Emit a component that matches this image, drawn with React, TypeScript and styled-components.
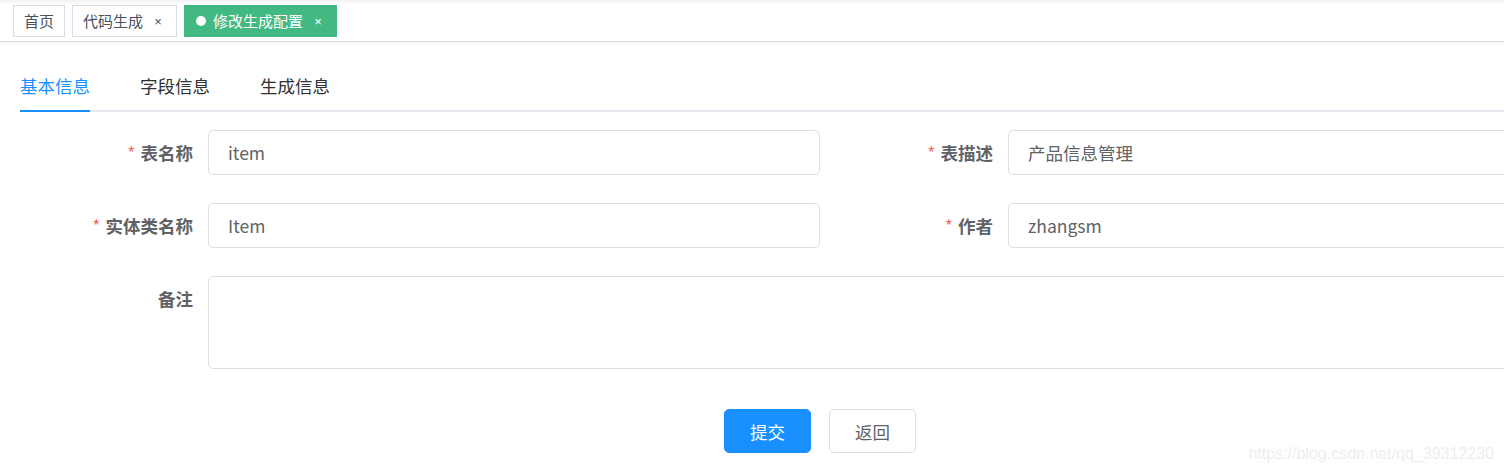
import React from "react";
import styled, { createGlobalStyle, css } from "styled-components";

const Global = createGlobalStyle`
  html, body { margin: 0; padding: 0; background: #fff; }
  body {
    font-family: "Segoe UI", "Noto Sans CJK SC", "Noto Sans", Arial, sans-serif;
    overflow: hidden;
  }
  * { box-sizing: border-box; }
`;

const Page = styled.div`
  position: relative;
  width: 1504px;
  height: 469px;
  overflow: hidden;
`;

const TagsBar = styled.div`
  height: 42px;
  display: flex;
  align-items: center;
  gap: 7px;
  padding-left: 13px;
  border-bottom: 1px solid #d8dce5;
  box-shadow: 0 1px 3px 0 rgba(0, 0, 0, 0.06);
  background: linear-gradient(#f0f1f3 0px, #fff 4px);
`;

const Tag = styled.div<{ $active?: boolean }>`
  height: 32px;
  display: flex;
  align-items: center;
  padding: 0 10px;
  border: 1px solid #d8dce5;
  background: #fff;
  color: #495060;
  font-size: 15px;
  font-family: "Noto Sans CJK SC", sans-serif;
  ${(p) =>
    p.$active &&
    css`
      padding-left: 11px;
      background: #42b983;
      border-color: #42b983;
      color: #fff;
    `}
`;

const Dot = styled.span`
  width: 10px;
  height: 10px;
  border-radius: 50%;
  background: #fff;
  margin-right: 7px;
`;

const Close = styled.span`
  display: inline-flex;
  justify-content: center;
  width: 16px;
  font-size: 13px;
  margin-left: 7px;
  margin-top: 2px;
  font-family: "Liberation Sans", Arial, sans-serif;
`;

const Main = styled.div`
  padding: 20px 0 0 20px;
`;

const TabsHeader = styled.div`
  display: flex;
  height: 50px;
  border-bottom: 2px solid #e4e7ed;
`;

const TabItem = styled.div<{ $first?: boolean }>`
  padding: 0 25px;
  ${(p) => p.$first && css`padding-left: 0;`}
  display: flex;
`;

const TabLabel = styled.span<{ $active?: boolean }>`
  line-height: 48px;
  height: 50px;
  font-size: 17.5px;
  font-family: "Noto Sans CJK SC", sans-serif;
  color: ${(p) => (p.$active ? "#1890ff" : "#303133")};
  border-bottom: 2px solid ${(p) => (p.$active ? "#1890ff" : "transparent")};
`;

const Form = styled.div`
  width: 1600px;
  padding-top: 18px;
`;

const Row = styled.div`
  display: flex;
`;

const FormItem = styled.div<{ $wide?: boolean }>`
  display: flex;
  width: ${(p) => (p.$wide ? "1600px" : "800px")};
  margin-bottom: 28px;
`;

const Label = styled.label`
  width: 188px;
  flex: none;
  padding-right: 15px;
  text-align: right;
  line-height: 45px;
  font-size: 17.5px;
  font-weight: bold;
  color: #606266;
  font-family: "Noto Sans CJK SC", sans-serif;
`;

const Star = styled.span`
  color: #f56c6c;
  margin-right: 5px;
  font-weight: normal;
`;

const Input = styled.div`
  flex: 1;
  height: 45px;
  border: 1px solid #dcdfe6;
  border-radius: 5px;
  padding: 0 19px;
  display: flex;
  align-items: center;
  font-size: 17.5px;
  color: #606266;
`;

const TextArea = styled.div`
  flex: 1;
  height: 93px;
  border: 1px solid #dcdfe6;
  border-radius: 5px;
`;

const Actions = styled.div`
  display: flex;
  justify-content: center;
  gap: 18px;
  margin-top: 12px;
`;

const Button = styled.button<{ $primary?: boolean }>`
  width: 87px;
  height: 44px;
  border-radius: 5px;
  font-size: 17.5px;
  font-family: "Noto Sans CJK SC", sans-serif;
  border: 1px solid #dcdfe6;
  background: #fff;
  color: #606266;
  padding: 0;
  ${(p) =>
    p.$primary &&
    css`
      background: #1890ff;
      border-color: #1890ff;
      color: #fff;
    `}
`;

const Watermark = styled.div`
  position: absolute;
  right: 10px;
  bottom: 6px;
  font-family: "Liberation Sans", Arial, sans-serif;
  font-size: 16px;
  color: #eeeeee;
`;

export default function App() {
  return (
    <>
      <Global />
      <Page>
        <TagsBar>
          <Tag>首页</Tag>
          <Tag>
            代码生成<Close>×</Close>
          </Tag>
          <Tag $active>
            <Dot />
            修改生成配置<Close>×</Close>
          </Tag>
        </TagsBar>
        <Main>
          <TabsHeader>
            <TabItem $first>
              <TabLabel $active>基本信息</TabLabel>
            </TabItem>
            <TabItem>
              <TabLabel>字段信息</TabLabel>
            </TabItem>
            <TabItem>
              <TabLabel>生成信息</TabLabel>
            </TabItem>
          </TabsHeader>
          <Form>
            <Row>
              <FormItem>
                <Label>
                  <Star>*</Star>表名称
                </Label>
                <Input>item</Input>
              </FormItem>
              <FormItem>
                <Label>
                  <Star>*</Star>表描述
                </Label>
                <Input>产品信息管理</Input>
              </FormItem>
            </Row>
            <Row>
              <FormItem>
                <Label>
                  <Star>*</Star>实体类名称
                </Label>
                <Input>Item</Input>
              </FormItem>
              <FormItem>
                <Label>
                  <Star>*</Star>作者
                </Label>
                <Input>zhangsm</Input>
              </FormItem>
            </Row>
            <Row>
              <FormItem $wide>
                <Label>备注</Label>
                <TextArea />
              </FormItem>
            </Row>
            <Actions>
              <Button $primary>提交</Button>
              <Button>返回</Button>
            </Actions>
          </Form>
        </Main>
        <Watermark>https://blog.csdn.net/qq_39312230</Watermark>
      </Page>
    </>
  );
}
